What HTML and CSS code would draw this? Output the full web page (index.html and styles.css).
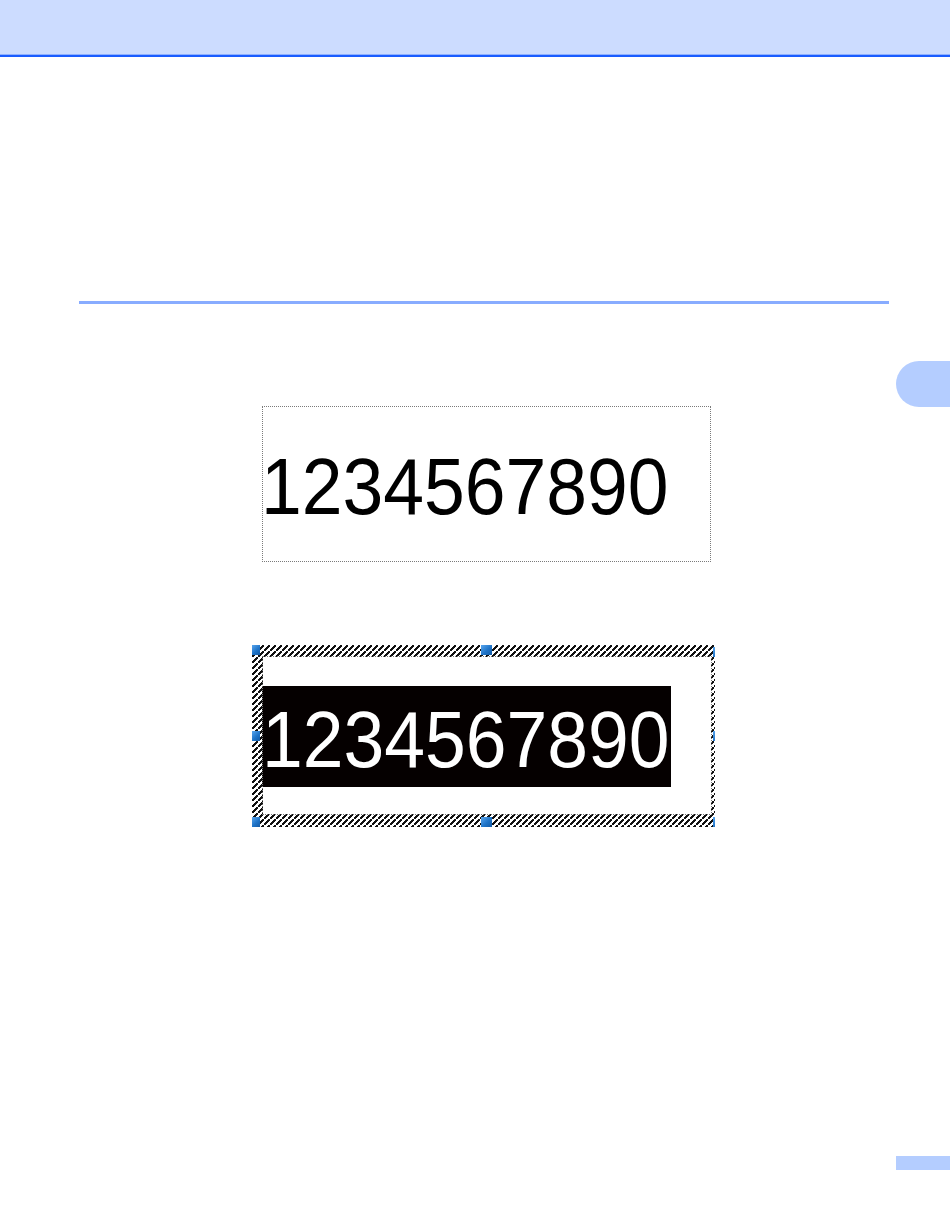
FILE: index.html
```html
<!DOCTYPE html>
<html lang="en">
  <head>
    <meta charset="UTF-8" />
    <meta name="viewport" content="width=device-width, initial-scale=1.0" />
    <title>Numbering</title>
    <link rel="stylesheet" href="styles.css">
  </head>
  <body>
    <header class="top-bar"></header>

    <main class="page">
      <hr class="rule" />

      <!-- chapter tab on the page edge -->
      <div class="chapter-tab"></div>

      <!-- label as printed -->
      <figure class="label-plain">
        <span class="digits">1234567890</span>
      </figure>

      <!-- label selected in the editor -->
      <figure class="label-selected">
        <div class="label-inner">
          <div class="digits-box">
            <span class="digits">1234567890</span>
          </div>
        </div>
        <span class="handle h-tl"></span>
        <span class="handle h-tm"></span>
        <span class="handle h-tr"></span>
        <span class="handle h-ml"></span>
        <span class="handle h-mr"></span>
        <span class="handle h-bl"></span>
        <span class="handle h-bm"></span>
        <span class="handle h-br"></span>
      </figure>
    </main>

    <div class="page-tab"></div>
  </body>
</html>
```

FILE: styles.css
```css
/* Basic styling */
body {
  font-family: "Liberation Sans", Arial, sans-serif;
  background-color: #fff;
  margin: 0;
  padding: 0;
  height: 1226px;
  position: relative;
  overflow: hidden;
}

.top-bar {
  height: 54px;
  background-color: #ccdcff;
  border-bottom: 1px solid #8fb0ff;
  box-shadow: 0 2px 0 #1a5cff;
}

.page {
  position: relative;
  display: flex;
  flex-direction: column;
  align-items: flex-start;
}

.rule {
  margin: 246px 0 0 79px;
  width: 810px;
  height: 3px;
  border: none;
  background-color: #88acff;
}

.chapter-tab {
  position: absolute;
  top: 306px;
  right: 0;
  width: 54px;
  height: 46px;
  border-radius: 23px 0 0 23px;
  background-color: #b4cdff;
}

.digits {
  display: inline-block;
  font-size: 80px;
  line-height: 80px;
  white-space: nowrap;
  transform: scaleX(0.916);
  transform-origin: left top;
}

/* first label: dotted outline */
.label-plain {
  margin: 102px 0 0 262px;
  width: 447px;
  height: 154px;
  border: 1px dotted #7a7a7a;
  box-sizing: content-box;
  overflow: visible;
}

.label-plain .digits {
  margin: 40px 0 0 -2px;
  color: #000;
}

/* second label: selection frame */
.label-selected {
  position: relative;
  margin: 83px 0 0 252px;
  width: 463px;
  height: 182px;
  padding: 12px 4px 13px 11px;
  box-sizing: border-box;
  overflow: hidden;
  background-color: #fff;
  background-image: linear-gradient(
    135deg,
    transparent 37%,
    #111 37%,
    #111 63%,
    transparent 63%
  );
  background-size: 6px 6px;
}

.label-inner {
  height: 100%;
  background-color: #fff;
  outline: 1px dotted #777;
  padding-top: 29px;
  box-sizing: border-box;
}

.digits-box {
  width: 409px;
  height: 101px;
  margin-left: -1px;
  background-color: #050000;
}

.digits-box .digits {
  margin: 14px 0 0 0;
  color: #fff;
}

.handle {
  position: absolute;
  width: 11px;
  height: 10px;
  background: linear-gradient(135deg, #5aa6ee 0%, #1f74c8 55%, #135ba6 100%);
}

.h-tl { left: 0; top: 0; width: 8px; }
.h-tm { left: 229px; top: 0; }
.h-tr { left: 461px; top: 2px; }
.h-ml { left: 0; top: 86px; width: 8px; }
.h-mr { left: 461px; top: 86px; }
.h-bl { left: 0; top: 172px; width: 8px; }
.h-bm { left: 229px; top: 172px; }
.h-br { left: 461px; top: 172px; }

.page-tab {
  position: absolute;
  right: 0;
  top: 1156px;
  width: 54px;
  height: 14px;
  background-color: #b4cdff;
}
```
